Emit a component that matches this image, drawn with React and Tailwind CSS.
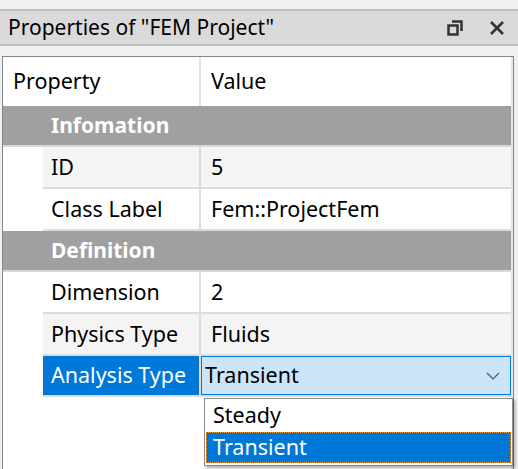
import React from 'react';

const font = { fontFamily: '"Noto Sans", "Open Sans", sans-serif' };

const RestoreIcon = () => (
  <svg width="16" height="16" viewBox="0 0 16 16" className="text-[#333]">
    <path d="M5 1.5h9.5V11" fill="none" stroke="currentColor" strokeWidth="2.5" />
    <rect x="1.5" y="5.5" width="9" height="9" fill="none" stroke="currentColor" strokeWidth="2.5" />
  </svg>
);

const CloseIcon = () => (
  <svg width="16" height="16" viewBox="0 0 16 16" className="text-[#333]">
    <path d="M2 2l12 12M14 2L2 14" stroke="currentColor" strokeWidth="2.6" />
  </svg>
);

const Chevron = () => (
  <svg width="14" height="8" viewBox="0 0 14 8" className="text-[#555]">
    <path d="M1 1l6 6 6-6" fill="none" stroke="currentColor" strokeWidth="1.2" />
  </svg>
);

const GroupRow = ({ label }) => (
  <div className="h-[41px] bg-[#a0a0a0] border-b-2 border-[#d8d8d8] flex items-center pl-[48px]">
    <span className="text-white font-bold text-[21px]">{label}</span>
  </div>
);

const ChildRow = ({ name, value, shaded }) => (
  <div className="flex pl-[40px] h-[42px]">
    <div className={`flex w-full border-b-2 border-[#dcdcdc] ${shaded ? 'bg-[#f4f4f4]' : 'bg-white'}`}>
      <div className="w-[158px] shrink-0 border-r-2 border-[#dcdcdc] flex items-center pl-[8px]">{name}</div>
      <div className="flex-1 flex items-center pl-[10px]">{value}</div>
    </div>
  </div>
);

export default function App() {
  return (
    <div className="w-[518px] h-[469px] bg-[#f0f0f0] overflow-hidden text-[21.5px] text-black" style={font}>
      <div className="h-[9px]" />
      <div className="h-[37px] bg-[#dadada] border-y-2 border-[#bfbfbf] flex items-center pl-[8px] pr-[13px]">
        <span className="flex-1 leading-none pb-[1px] text-[21px]">Properties of "FEM Project"</span>
        <div className="flex items-center gap-[26px]">
          <RestoreIcon />
          <CloseIcon />
        </div>
      </div>
      <div className="h-[10px]" />
      <div className="ml-[2px] w-[512px] h-[420px] border border-[#828790] bg-white relative">
        <div className="border-r-2 border-[#e6e6e6] h-full">
          <div className="flex h-[49px]">
            <div className="w-[198px] shrink-0 border-r-2 border-[#e3e3e3] flex items-center pl-[10px]">Property</div>
            <div className="flex-1 flex items-center pl-[10px]">Value</div>
          </div>
          <GroupRow label="Infomation" />
          <ChildRow name="ID" value="5" shaded />
          <ChildRow name="Class Label" value="Fem::ProjectFem" />
          <GroupRow label="Definition" />
          <ChildRow name="Dimension" value="2" />
          <ChildRow name="Physics Type" value="Fluids" shaded />
          <div className="flex pl-[40px] h-[41px]">
            <div className="flex w-full border-b-2 border-[#dcdcdc]">
              <div className="w-[158px] shrink-0 bg-[#0078d7] text-white border-r-2 border-[#dcdcdc] flex items-center pl-[8px]">
                Analysis Type
              </div>
              <div className="flex-1 bg-[#cce4f7] border border-[#0078d7] flex items-center pl-[3px] pr-[10px]">
                <span className="flex-1">Transient</span>
                <Chevron />
              </div>
            </div>
          </div>
        </div>
        <div className="absolute left-[201px] top-[341px] w-[309px] h-[68px] bg-white border border-[#8c8c8c] shadow-[2px_2px_3px_rgba(0,0,0,0.35)] flex flex-col">
          <div className="h-[33px] flex items-center pl-[8px]">Steady</div>
          <div className="h-[31px] mx-[1px] bg-[#0078d7] text-white border border-dotted border-[#f0a040] flex items-center pl-[6px]">
            Transient
          </div>
        </div>
      </div>
    </div>
  );
}
